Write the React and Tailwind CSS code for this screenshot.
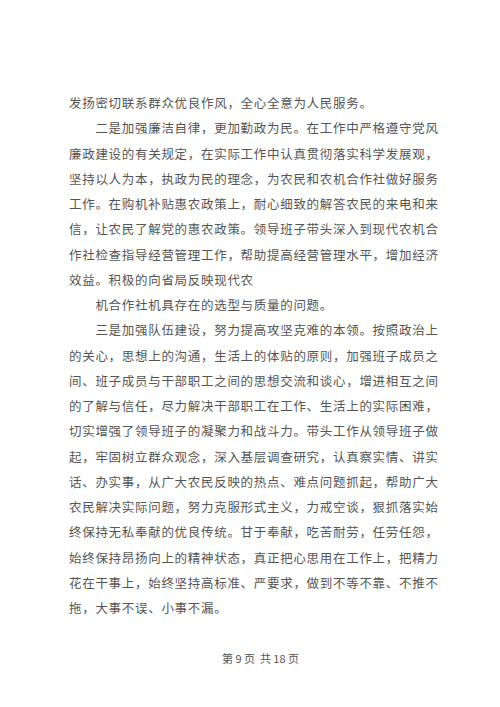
import React from "react";

const paragraphs = [
    { indent: false, lines: ["发扬密切联系群众优良作风，全心全意为人民服务。"] },
    {
        indent: true,
        lines: [
            "二是加强廉洁自律，更加勤政为民。在工作中严格遵守党风",
            "廉政建设的有关规定，在实际工作中认真贯彻落实科学发展观，",
            "坚持以人为本，执政为民的理念，为农民和农机合作社做好服务",
            "工作。在购机补贴惠农政策上，耐心细致的解答农民的来电和来",
            "信，让农民了解党的惠农政策。领导班子带头深入到现代农机合",
            "作社检查指导经营管理工作，帮助提高经营管理水平，增加经济",
            "效益。积极的向省局反映现代农",
        ],
    },
    { indent: true, lines: ["机合作社机具存在的选型与质量的问题。"] },
    {
        indent: true,
        lines: [
            "三是加强队伍建设，努力提高攻坚克难的本领。按照政治上",
            "的关心，思想上的沟通，生活上的体贴的原则，加强班子成员之",
            "间、班子成员与干部职工之间的思想交流和谈心，增进相互之间",
            "的了解与信任，尽力解决干部职工在工作、生活上的实际困难，",
            "切实增强了领导班子的凝聚力和战斗力。带头工作从领导班子做",
            "起，牢固树立群众观念，深入基层调查研究，认真察实情、讲实",
            "话、办实事，从广大农民反映的热点、难点问题抓起，帮助广大",
            "农民解决实际问题，努力克服形式主义，力戒空谈，狠抓落实始",
            "终保持无私奉献的优良传统。甘于奉献，吃苦耐劳，任劳任怨，",
            "始终保持昂扬向上的精神状态，真正把心思用在工作上，把精力",
            "花在干事上，始终坚持高标准、严要求，做到不等不靠、不推不",
            "拖，大事不误、小事不漏。",
        ],
    },
];

export default function App() {
    return (
        <div className="w-[500px] h-[707px] bg-white overflow-hidden flex flex-col font-['Noto_Sans_CJK_SC',sans-serif]">
            {/* Body text */}
            <div className="pt-[90px] pl-[69px] text-[12.5px] tracking-[0.7px] leading-[25.25px] text-[#555] whitespace-nowrap">
                {paragraphs.map((p, i) => (
                    <div key={i}>
                        {p.lines.map((line, j) => (
                            <div key={j} className={j === 0 && p.indent ? "pl-[26.4px]" : ""}>
                                {line}
                            </div>
                        ))}
                    </div>
                ))}
            </div>

            {/* Page footer */}
            <div className="pt-[31px] flex justify-center pl-[21px] text-[11px] leading-[14px] text-[#555]">
                <span>第 9 页&nbsp;&nbsp;共 18 页</span>
            </div>
        </div>
    );
}
